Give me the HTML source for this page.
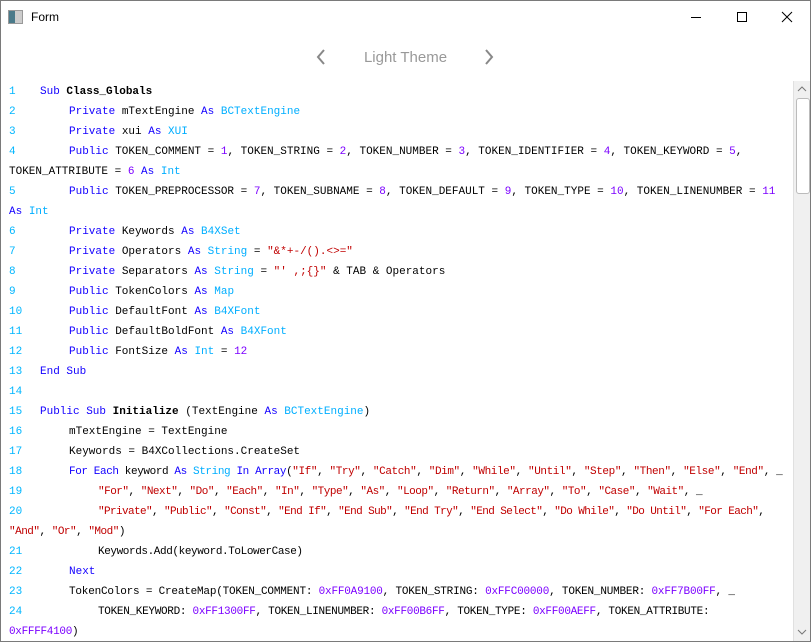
<!DOCTYPE html>
<html><head><meta charset="utf-8"><style>
body{margin:0;width:811px;height:642px;overflow:hidden;background:#fff;font-family:"Liberation Sans",sans-serif;}
.win{position:absolute;left:0;top:0;width:809px;height:640px;border:1px solid #7a7a7a;overflow:hidden;}
.title{position:absolute;left:30px;top:9px;font-size:12px;color:#000;}
.ico{position:absolute;left:7px;top:9px;width:13px;height:12px;border:1px solid #999;background:linear-gradient(90deg,#4a7a8a 0 45%,#ccc 45%);}
.hdr{position:absolute;top:48px;left:0;width:809px;text-align:center;font-size:15px;color:#999;}
.code{position:absolute;left:0;top:80px;width:792px;height:560px;overflow:hidden;font-family:"Liberation Mono",monospace;font-size:11px;}
.r{position:absolute;left:0;height:20px;line-height:20px;white-space:pre;color:#000;}
.n{position:absolute;left:8px;color:#00B6FF;}
.c{position:absolute;white-space:pre;}
.k{color:#1300FF}.t{color:#00AEFF}.m{color:#7B00FF}.s{color:#C00000}
.sb{position:absolute;left:792px;top:80px;width:17px;height:560px;background:#f0f0f0;border-left:1px solid #e0e0e0;}
.th{position:absolute;left:2px;top:17px;width:12px;height:94px;background:#fff;border:1px solid #bbb;border-radius:3px;}
</style></head><body><div class="win">
<div class="ico"></div><div class="title">Form</div>
<svg style="position:absolute;left:690px;top:10px" width="110" height="14"><path d="M0 6.5h10" stroke="#000"/><path d="M46.5 1.5h9v9h-9z" stroke="#000" fill="none"/><path d="M91 1l10 10M101 1l-10 10" stroke="#000"/></svg>
<svg style="position:absolute;left:312px;top:47px" width="186" height="18"><path d="M11 2l-6 7 6 7" stroke="#888" stroke-width="2" fill="none"/><path d="M173 2l6 7-6 7" stroke="#888" stroke-width="2" fill="none"/></svg>
<div class="hdr">Light Theme</div>
<div class="code">
<div class="r" style="top:1px"><span class="n">1</span><span class="c" style="left:39px"><span class="k">Sub</span> <b>Class_Globals</b></span></div>
<div class="r" style="top:21px"><span class="n">2</span><span class="c" style="left:68px"><span class="k">Private</span> mTextEngine <span class="k">As</span> <span class="t">BCTextEngine</span></span></div>
<div class="r" style="top:41px"><span class="n">3</span><span class="c" style="left:68px"><span class="k">Private</span> xui <span class="k">As</span> <span class="t">XUI</span></span></div>
<div class="r" style="top:61px"><span class="n">4</span><span class="c" style="left:68px"><span class="k">Public</span> TOKEN_COMMENT = <span class="m">1</span>, TOKEN_STRING = <span class="m">2</span>, TOKEN_NUMBER = <span class="m">3</span>, TOKEN_IDENTIFIER = <span class="m">4</span>, TOKEN_KEYWORD = <span class="m">5</span>,</span></div>
<div class="r" style="top:81px"><span class="c" style="left:8px">TOKEN_ATTRIBUTE = <span class="m">6</span> <span class="k">As</span> <span class="t">Int</span></span></div>
<div class="r" style="top:101px"><span class="n">5</span><span class="c" style="left:68px"><span class="k">Public</span> TOKEN_PREPROCESSOR = <span class="m">7</span>, TOKEN_SUBNAME = <span class="m">8</span>, TOKEN_DEFAULT = <span class="m">9</span>, TOKEN_TYPE = <span class="m">10</span>, TOKEN_LINENUMBER = <span class="m">11</span></span></div>
<div class="r" style="top:121px"><span class="c" style="left:8px"><span class="k">As</span> <span class="t">Int</span></span></div>
<div class="r" style="top:141px"><span class="n">6</span><span class="c" style="left:68px"><span class="k">Private</span> Keywords <span class="k">As</span> <span class="t">B4XSet</span></span></div>
<div class="r" style="top:161px"><span class="n">7</span><span class="c" style="left:68px"><span class="k">Private</span> Operators <span class="k">As</span> <span class="t">String</span> = <span class="s">"&amp;*+-/().&lt;&gt;="</span></span></div>
<div class="r" style="top:181px"><span class="n">8</span><span class="c" style="left:68px"><span class="k">Private</span> Separators <span class="k">As</span> <span class="t">String</span> = <span class="s">"' ,;{}"</span> &amp; TAB &amp; Operators</span></div>
<div class="r" style="top:201px"><span class="n">9</span><span class="c" style="left:68px"><span class="k">Public</span> TokenColors <span class="k">As</span> <span class="t">Map</span></span></div>
<div class="r" style="top:221px"><span class="n">10</span><span class="c" style="left:68px"><span class="k">Public</span> DefaultFont <span class="k">As</span> <span class="t">B4XFont</span></span></div>
<div class="r" style="top:241px"><span class="n">11</span><span class="c" style="left:68px"><span class="k">Public</span> DefaultBoldFont <span class="k">As</span> <span class="t">B4XFont</span></span></div>
<div class="r" style="top:261px"><span class="n">12</span><span class="c" style="left:68px"><span class="k">Public</span> FontSize <span class="k">As</span> <span class="t">Int</span> = <span class="m">12</span></span></div>
<div class="r" style="top:281px"><span class="n">13</span><span class="c" style="left:39px"><span class="k">End Sub</span></span></div>
<div class="r" style="top:301px"><span class="n">14</span></div>
<div class="r" style="top:321px"><span class="n">15</span><span class="c" style="left:39px"><span class="k">Public Sub</span> <b>Initialize</b> (TextEngine <span class="k">As</span> <span class="t">BCTextEngine</span>)</span></div>
<div class="r" style="top:341px"><span class="n">16</span><span class="c" style="left:68px">mTextEngine = TextEngine</span></div>
<div class="r" style="top:361px"><span class="n">17</span><span class="c" style="left:68px">Keywords = B4XCollections.CreateSet</span></div>
<div class="r" style="top:381px"><span class="n">18</span><span class="c" style="left:68px;letter-spacing:-0.4px"><span class="k">For Each</span> keyword <span class="k">As</span> <span class="t">String</span> <span class="k">In</span> <span class="k">Array</span>(<span class="s">"If"</span>, <span class="s">"Try"</span>, <span class="s">"Catch"</span>, <span class="s">"Dim"</span>, <span class="s">"While"</span>, <span class="s">"Until"</span>, <span class="s">"Step"</span>, <span class="s">"Then"</span>, <span class="s">"Else"</span>, <span class="s">"End"</span>, _</span></div>
<div class="r" style="top:401px"><span class="n">19</span><span class="c" style="left:97px;letter-spacing:-0.5px"><span class="s">"For"</span>, <span class="s">"Next"</span>, <span class="s">"Do"</span>, <span class="s">"Each"</span>, <span class="s">"In"</span>, <span class="s">"Type"</span>, <span class="s">"As"</span>, <span class="s">"Loop"</span>, <span class="s">"Return"</span>, <span class="s">"Array"</span>, <span class="s">"To"</span>, <span class="s">"Case"</span>, <span class="s">"Wait"</span>, _</span></div>
<div class="r" style="top:421px"><span class="n">20</span><span class="c" style="left:97px;letter-spacing:-0.6px"><span class="s">"Private"</span>, <span class="s">"Public"</span>, <span class="s">"Const"</span>, <span class="s">"End If"</span>, <span class="s">"End Sub"</span>, <span class="s">"End Try"</span>, <span class="s">"End Select"</span>, <span class="s">"Do While"</span>, <span class="s">"Do Until"</span>, <span class="s">"For Each"</span>,</span></div>
<div class="r" style="top:441px"><span class="c" style="left:8px;letter-spacing:-0.5px"><span class="s">"And"</span>, <span class="s">"Or"</span>, <span class="s">"Mod"</span>)</span></div>
<div class="r" style="top:461px"><span class="n">21</span><span class="c" style="left:97px;letter-spacing:-0.4px">Keywords.Add(keyword.ToLowerCase)</span></div>
<div class="r" style="top:481px"><span class="n">22</span><span class="c" style="left:68px"><span class="k">Next</span></span></div>
<div class="r" style="top:501px"><span class="n">23</span><span class="c" style="left:68px;letter-spacing:-0.2px">TokenColors = CreateMap(TOKEN_COMMENT: <span class="m">0xFF0A9100</span>, TOKEN_STRING: <span class="m">0xFFC00000</span>, TOKEN_NUMBER: <span class="m">0xFF7B00FF</span>, _</span></div>
<div class="r" style="top:521px"><span class="n">24</span><span class="c" style="left:97px;letter-spacing:-0.3px">TOKEN_KEYWORD: <span class="m">0xFF1300FF</span>, TOKEN_LINENUMBER: <span class="m">0xFF00B6FF</span>, TOKEN_TYPE: <span class="m">0xFF00AEFF</span>, TOKEN_ATTRIBUTE:</span></div>
<div class="r" style="top:541px"><span class="c" style="left:8px;letter-spacing:-0.3px"><span class="m">0xFFFF4100</span>)</span></div>
</div>
<div class="sb"><svg style="position:absolute;left:3px;top:4px" width="10" height="8"><path d="M1 6l4-4 4 4" stroke="#777" fill="none"/></svg><div class="th"></div><svg style="position:absolute;left:3px;top:547px" width="10" height="8"><path d="M1 2l4 4 4-4" stroke="#777" fill="none"/></svg></div>
</div></body></html>
